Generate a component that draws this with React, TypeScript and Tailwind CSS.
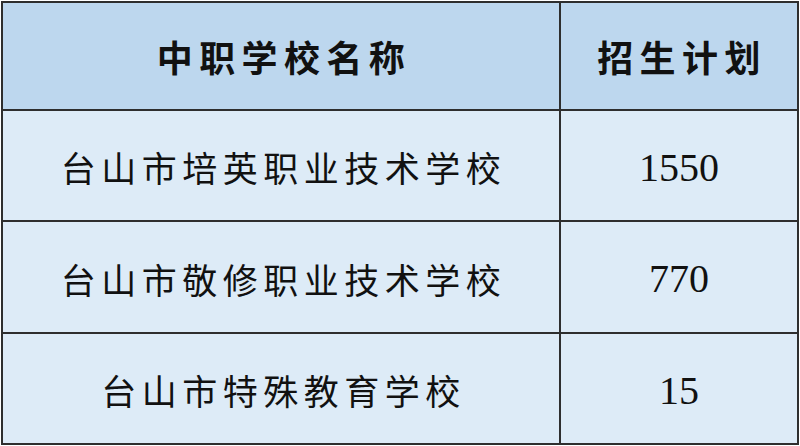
const rows = [
  { name: '台山市培英职业技术学校', plan: '1550' },
  { name: '台山市敬修职业技术学校', plan: '770' },
  { name: '台山市特殊教育学校',     plan: '15' },
]

const cjk = "font-['Noto_Sans_CJK_SC','Noto_Sans',sans-serif]"

export default function App() {
  return (
    <div className="w-[800px] h-[446px] bg-white p-[1px]">
      <div className="grid h-full grid-cols-[556px_1fr] grid-rows-[106px_109px_110px_1fr] gap-[2px] bg-[#2e2e2e] p-[2px]">

        {/* header */}
        <div className={`flex items-center justify-center bg-[#bdd7ee] pl-[6px] text-[36px] font-bold tracking-[6.4px] text-[#111] ${cjk}`}>
          中职学校名称
        </div>
        <div className={`flex items-center justify-center bg-[#bdd7ee] pl-[6px] text-[36px] font-bold tracking-[6.4px] text-[#111] ${cjk}`}>
          招生计划
        </div>

        {rows.map((r) => (
          <>
            <div
              key={r.name}
              className={`flex items-center justify-center bg-[#ddebf7] pl-[5px] pt-[4px] text-[35px] tracking-[5.5px] text-[#111] ${cjk}`}
            >
              {r.name}
            </div>
            <div
              key={r.plan}
              className="flex items-center justify-center bg-[#ddebf7] pt-[4px] font-['Liberation_Serif',serif] text-[40px] text-[#111]"
            >
              {r.plan}
            </div>
          </>
        ))}

      </div>
    </div>
  )
}
